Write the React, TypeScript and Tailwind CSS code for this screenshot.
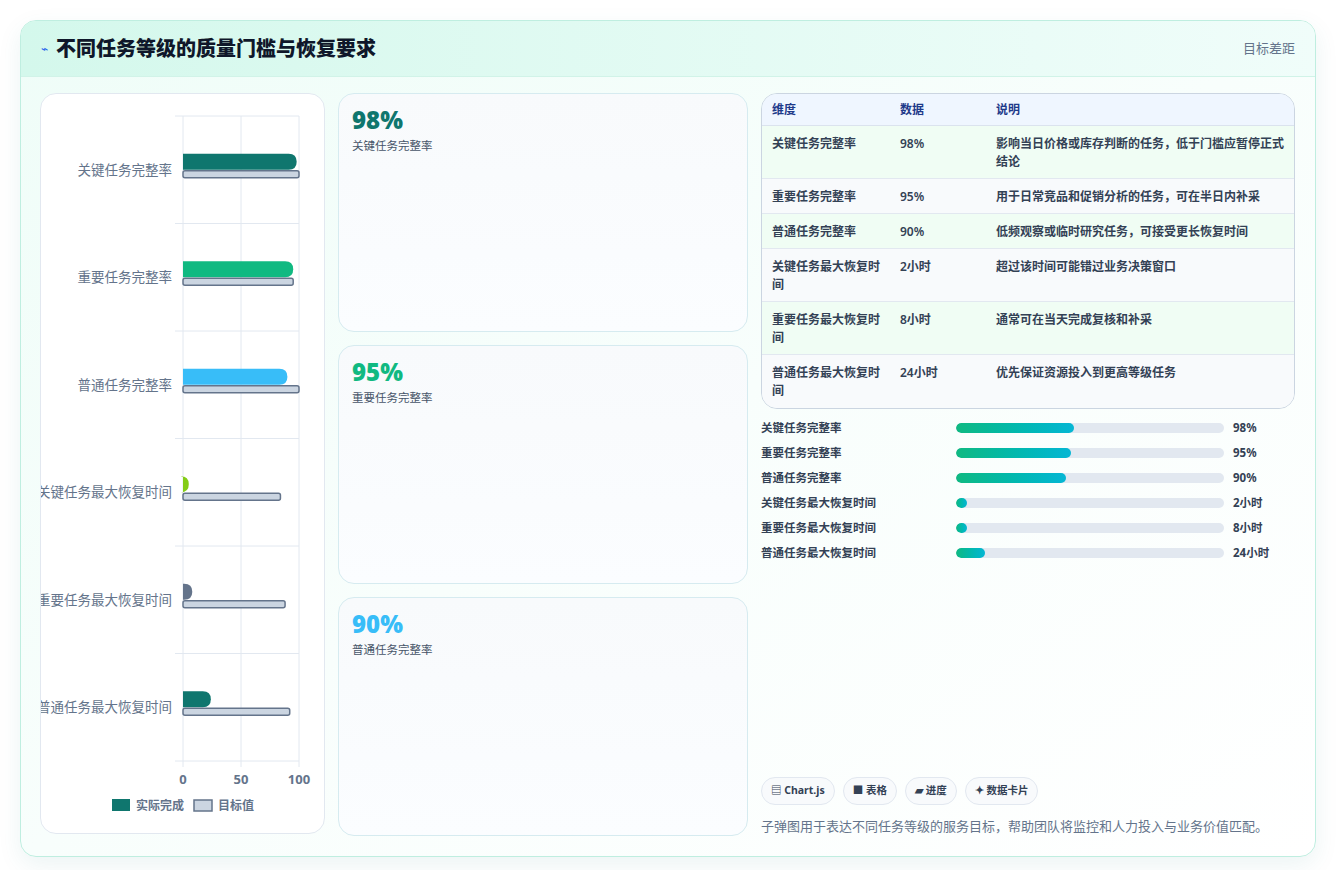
import React from "react";

const cats = [
  { name: "关键任务完整率", actual: 98, target: 100, color: "#0f766e" },
  { name: "重要任务完整率", actual: 95, target: 95, color: "#10b981" },
  { name: "普通任务完整率", actual: 90, target: 100, color: "#38bdf8" },
  { name: "关键任务最大恢复时间", actual: 5, target: 84, color: "#84cc16" },
  { name: "重要任务最大恢复时间", actual: 8, target: 88, color: "#64748b" },
  { name: "普通任务最大恢复时间", actual: 24, target: 92, color: "#0f766e" },
];

const rows = [
  ["关键任务完整率", "98%", "影响当日价格或库存判断的任务，低于门槛应暂停正式结论"],
  ["重要任务完整率", "95%", "用于日常竞品和促销分析的任务，可在半日内补采"],
  ["普通任务完整率", "90%", "低频观察或临时研究任务，可接受更长恢复时间"],
  ["关键任务最大恢复时间", "2小时", "超过该时间可能错过业务决策窗口"],
  ["重要任务最大恢复时间", "8小时", "通常可在当天完成复核和补采"],
  ["普通任务最大恢复时间", "24小时", "优先保证资源投入到更高等级任务"],
];

const progress = [
  ["关键任务完整率", 44, "98%"],
  ["重要任务完整率", 43, "95%"],
  ["普通任务完整率", 41, "90%"],
  ["关键任务最大恢复时间", 4, "2小时"],
  ["重要任务最大恢复时间", 4, "8小时"],
  ["普通任务最大恢复时间", 11, "24小时"],
] as const;

const metrics = [
  { v: "98%", l: "关键任务完整率", c: "text-[#0f766e]" },
  { v: "95%", l: "重要任务完整率", c: "text-[#10b981]" },
  { v: "90%", l: "普通任务完整率", c: "text-[#38bdf8]" },
];

function Chart() {
  const x0 = 142, w = 116, top = 22, rowH = 107.5;
  return (
    <svg width="284" height="740" viewBox="0 0 284 740" className="block">
      {[0, 50, 100].map((t) => (
        <line key={t} x1={x0 + (t / 100) * w} x2={x0 + (t / 100) * w} y1={top} y2={top + rowH * 6 + 6} stroke="#e2e8f0" />
      ))}
      {[0, 1, 2, 3, 4, 5, 6].map((i) => (
        <line key={i} x1={x0 - 8} x2={x0 + w} y1={top + rowH * i} y2={top + rowH * i} stroke="#e2e8f0" />
      ))}
      {cats.map((c, i) => {
        const cy = top + rowH * i + rowH / 2;
        const aw = (c.actual / 100) * w;
        const tw = (c.target / 100) * w;
        return (
          <g key={c.name}>
            <text x={x0 - 11} y={cy + 5} textAnchor="end" fontSize="13.5" fill="#64748b">{c.name}</text>
            <path d={`M${x0} ${cy - 16} H${x0 + aw - 8} Q${x0 + aw} ${cy - 16} ${x0 + aw} ${cy - 8} Q${x0 + aw} ${cy} ${x0 + aw - 8} ${cy} H${x0} Z`} fill={c.color} />
            <rect x={x0} y={cy + 1} width={tw} height={7} rx="2" fill="#cbd5e1" stroke="#64748b" strokeWidth="1.5" />
          </g>
        );
      })}
      {[0, 50, 100].map((t) => (
        <text key={t} x={x0 + (t / 100) * w} y={690} textAnchor="middle" fontSize="13" fontWeight="700" fill="#64748b">{t}</text>
      ))}
      <rect x="71" y="705" width="18" height="12" fill="#0f766e" />
      <text x="95" y="716" fontSize="12" fontWeight="700" fill="#64748b">实际完成</text>
      <rect x="153" y="706" width="18" height="11" fill="#cbd5e1" stroke="#64748b" strokeWidth="1.5" />
      <text x="177" y="716" fontSize="12" fontWeight="700" fill="#64748b">目标值</text>
    </svg>
  );
}

export default function App() {
  return (
    <div className="min-h-[870px] bg-white p-5 pb-4" style={{ fontFamily: '"Noto Sans", "Noto Sans CJK SC", sans-serif' }}>
      <div className="rounded-2xl border border-[#bfeee0] bg-gradient-to-br from-[#effdf8] via-[#f8fefc] to-white shadow-[0_8px_24px_rgba(15,118,110,0.08)] overflow-hidden">
        <div className="h-14 flex items-center justify-between px-5 bg-gradient-to-r from-[#d4f8ec] to-[#f0fdfa] border-b border-[#d1f3e8]">
          <div className="flex items-center gap-2">
            <span className="text-[#2563eb] text-xs">⌁</span>
            <h1 className="text-[20px] font-extrabold text-[#0f172a]">不同任务等级的质量门槛与恢复要求</h1>
          </div>
          <span className="text-[13px] text-[#64748b]">目标差距</span>
        </div>
        <div className="flex gap-[13px] pl-[19px] pr-5 pt-4 pb-5">
          <div className="w-[285px] h-[741px] shrink-0 rounded-2xl border border-[#e2e8f0] bg-white overflow-hidden">
            <Chart />
          </div>
          <div className="w-[410px] shrink-0 flex flex-col gap-[13px]">
            {metrics.map((m) => (
              <div key={m.v} className="h-[239px] rounded-2xl border border-[#d6ebf0] bg-gradient-to-b from-[#f8fafc] to-[#fbfdff] px-[13px] pt-[10px]">
                <div className={`text-[24px] font-black leading-8 ${m.c}`}>{m.v}</div>
                <div className="text-[11.5px] text-[#475569] mt-[1px]">{m.l}</div>
              </div>
            ))}
          </div>
          <div className="flex-1 flex flex-col">
            <div className="rounded-2xl border border-[#cbd5e1] overflow-hidden text-[12px]">
              <div className="grid grid-cols-[128px_96px_1fr] h-8 items-center bg-[#eff6ff] border-b border-[#dbe3ee] px-[10px] font-bold text-[#1e3a8a]">
                <div>维度</div><div>数据</div><div>说明</div>
              </div>
              {rows.map((r, i) => (
                <div key={r[0]} className={`grid grid-cols-[128px_96px_1fr] px-[10px] pt-[9px] ${i < 5 ? "border-b border-[#e2e8f0]" : ""} ${i === 0 || i === 2 || i === 4 ? "bg-[#f0fdf4]" : "bg-[#f8fafc]"} ${i === 0 || i >= 3 ? "h-[53px]" : "h-[35px]"} font-semibold text-[#334155] leading-[18px]`}>
                  <div className="pr-4">{r[0]}</div><div>{r[1]}</div><div>{r[2]}</div>
                </div>
              ))}
            </div>
            <div className="mt-[6px] flex flex-col">
              {progress.map(([l, p, v]) => (
                <div key={l} className="h-[25px] flex items-center text-[11.5px] font-semibold text-[#334155]">
                  <div className="w-[195px]">{l}</div>
                  <div className="w-[268px] h-[10px] rounded-full bg-[#e2e8f0] overflow-hidden">
                    <div className="h-full rounded-full bg-gradient-to-r from-[#10b981] to-[#06b6d4]" style={{ width: `${p}%` }} />
                  </div>
                  <div className="ml-[9px] font-bold">{v}</div>
                </div>
              ))}
            </div>
            <div className="mt-auto flex gap-2">
              {["▤ Chart.js", "■ 表格", "▰ 进度", "✦ 数据卡片"].map((t) => (
                <span key={t} className="h-[28px] px-[9px] flex items-center rounded-full border border-[#e2e8f0] bg-[#f8fafc] text-[10.5px] font-bold text-[#334155]">{t}</span>
              ))}
            </div>
            <p className="mt-[11px] text-[13px] text-[#64748b] leading-5">子弹图用于表达不同任务等级的服务目标，帮助团队将监控和人力投入与业务价值匹配。</p>
          </div>
        </div>
      </div>
    </div>
  );
}
